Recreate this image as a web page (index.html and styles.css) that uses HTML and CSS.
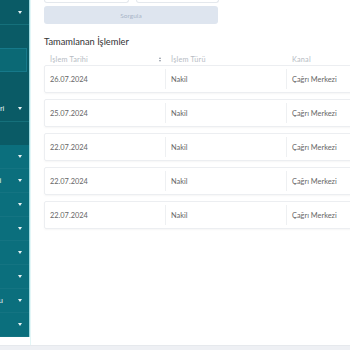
FILE: index.html
```html
<!DOCTYPE html>
<html lang="tr">
<head>
    <meta charset="UTF-8">
    <meta name="viewport" content="width=device-width, initial-scale=1.0">
    <title>Tamamlanan İşlemler</title>
    <link rel="stylesheet" href="styles.css">
</head>
<body>
    <div class="page">
        <div class="layout">
            <aside class="sidebar">
                <div class="sidebar-scroll">
                    <a class="nav-item nav-parent open"><span class="nav-label">İşlemler</span><span class="caret"></span></a>
                    <a class="nav-item nav-sub"><span class="nav-label">Yeni</span></a>
                    <a class="nav-item nav-sub active"><span class="nav-label">Geçmiş</span></a>
                    <a class="nav-item nav-sub"><span class="nav-label">Talepler</span></a>
                    <a class="nav-item nav-parent tall"><span class="nav-label">Sigorta Bilgileri</span><span class="caret"></span></a>
                    <a class="nav-item nav-sub"><span class="nav-label">Özet</span></a>

                    <div class="nav-group">
                        <a class="nav-item"><span class="nav-label">Poliçeler</span><span class="caret"></span></a>
                        <a class="nav-item"><span class="nav-label">Tahsilat Bilgisi</span><span class="caret"></span></a>
                        <a class="nav-item"><span class="nav-label">Teklifler</span><span class="caret"></span></a>
                        <a class="nav-item"><span class="nav-label">Hasarlar</span><span class="caret"></span></a>
                        <a class="nav-item"><span class="nav-label">Belgeler</span><span class="caret"></span></a>
                        <a class="nav-item"><span class="nav-label">Raporlar</span><span class="caret"></span></a>
                        <a class="nav-item"><span class="nav-label">Hasar Durumu</span><span class="caret"></span></a>
                        <a class="nav-item"><span class="nav-label">Ayarlar</span><span class="caret"></span></a>
                    </div>
                </div>
            </aside>

            <main class="main">
                <div class="filters">
                    <div class="field"></div>
                    <div class="field"></div>
                </div>
                <button type="button" class="query-btn" disabled>Sorgula</button>

                <h2 class="section-title">Tamamlanan İşlemler</h2>

                <div class="table">
                    <div class="table-head">
                        <div class="th">İşlem Tarihi <span class="sort"></span></div>
                        <div class="th">İşlem Türü</div>
                        <div class="th">Kanal</div>
                        <div class="th">Durum</div>
                    </div>

                    <div class="tr">
                        <div class="td">26.07.2024</div>
                        <div class="td">Nakil</div>
                        <div class="td">Çağrı Merkezi</div>
                        <div class="td">Tamamlandı</div>
                    </div>
                    <div class="tr">
                        <div class="td">25.07.2024</div>
                        <div class="td">Nakil</div>
                        <div class="td">Çağrı Merkezi</div>
                        <div class="td">Tamamlandı</div>
                    </div>
                    <div class="tr">
                        <div class="td">22.07.2024</div>
                        <div class="td">Nakil</div>
                        <div class="td">Çağrı Merkezi</div>
                        <div class="td">Tamamlandı</div>
                    </div>
                    <div class="tr">
                        <div class="td">22.07.2024</div>
                        <div class="td">Nakil</div>
                        <div class="td">Çağrı Merkezi</div>
                        <div class="td">Tamamlandı</div>
                    </div>
                    <div class="tr">
                        <div class="td">22.07.2024</div>
                        <div class="td">Nakil</div>
                        <div class="td">Çağrı Merkezi</div>
                        <div class="td">Tamamlandı</div>
                    </div>
                </div>
            </main>
        </div>
        <footer class="footer"></footer>
    </div>
</body>
</html>
```

FILE: styles.css
```css
body {
    font-family: Lato, "Liberation Sans", Arial, sans-serif;
    background-color: #ffffff;
    margin: 0;
    padding: 0;
    overflow: hidden;
}

.page {
    height: 350px;
    display: flex;
    flex-direction: column;
}

.layout {
    flex: 1;
    display: flex;
    align-items: flex-start;
    min-height: 0;
}

/* sidebar (sayfa yatayda kaydırılmış gibi) */
.sidebar {
    width: 29px;
    height: 337px;
    flex: none;
    overflow: hidden;
    background-color: #0a5b66;
    border-right: 1px solid #9fdbe1;
}

.sidebar-scroll {
    width: 89px;
    margin-left: -60px;
}

.nav-item {
    display: flex;
    align-items: center;
    height: 23px;
    padding: 0 7px 0 11px;
    color: #e6f3f4;
    font-family: "Liberation Sans", Arial, sans-serif;
    font-size: 8px;
    text-decoration: none;
    box-sizing: border-box;
}

.nav-label {
    flex: 1;
    white-space: nowrap;
}

.caret {
    flex: none;
    width: 0;
    height: 0;
    border-left: 2.5px solid transparent;
    border-right: 2.5px solid transparent;
    border-top: 3px solid #e8f4f5;
}

.nav-parent {
    height: 25px;
    border-bottom: 1px solid #15707b;
}

.nav-parent.tall {
    height: 27px;
}

.nav-sub {
    padding-left: 19px;
}

.nav-sub.active {
    height: 24px;
    margin-right: 2px;
    background-color: #0b6975;
    border: 1px solid #16798a;
}

.nav-group {
    background-color: #0b6f7d;
}

.nav-group .nav-item {
    height: 24px;
    border-bottom: 1px solid rgba(255, 255, 255, 0.04);
}

/* main */
.main {
    flex: 1;
    align-self: stretch;
    padding-left: 13px;
    border-left: 1px solid #e3f6f7;
    min-width: 0;
}

.filters {
    display: grid;
    grid-template-columns: 85px 83px;
    gap: 7px;
    height: 3px;
}

.field {
    border: 1px solid #e4e8ed;
    border-top: none;
    border-radius: 0 0 3px 3px;
}

.query-btn {
    display: block;
    width: 174px;
    height: 18px;
    margin-top: 3px;
    padding: 0;
    border: none;
    border-radius: 3px;
    background-color: #dee5ef;
    color: #a9b5c8;
    font-family: inherit;
    font-size: 6.5px;
}

.section-title {
    margin: 12px 0 0 0;
    font-size: 9.3px;
    line-height: 12px;
    font-weight: normal;
    color: #333333;
}

.table {
    width: 500px;
    margin-top: 5px;
}

.table-head, .tr {
    display: grid;
    grid-template-columns: 120px 121px 121px 1fr;
}

.table-head {
    height: 12px;
    padding-left: 1px;
}

.th {
    display: flex;
    align-items: center;
    padding-left: 5px;
    color: #b6bcc4;
    font-size: 7.3px;
    letter-spacing: 0.2px;
}

.th:not(:first-child) {
    padding-left: 6px;
}

.sort {
    margin-left: auto;
    margin-right: 4px;
    display: flex;
    flex-direction: column;
    gap: 1px;
}

.sort::before, .sort::after {
    content: "";
    width: 0;
    height: 0;
    border-left: 1.5px solid transparent;
    border-right: 1.5px solid transparent;
}

.sort::before {
    border-bottom: 2px solid #8e97a2;
}

.sort::after {
    border-top: 2px solid #8e97a2;
}

.tr {
    height: 28px;
    margin-bottom: 6px;
    border: 1px solid #eceef1;
    border-radius: 2px;
    box-shadow: 0 1px 2px rgba(0, 0, 0, 0.04);
    box-sizing: border-box;
}

.td {
    display: flex;
    align-items: center;
    padding-left: 5px;
    margin: 3px 0;
    color: #666666;
    font-size: 7.4px;
}

.td:not(:first-child) {
    border-left: 1px solid #eef0f2;
}

.footer {
    height: 4px;
    background-color: #eef0f4;
    border-top: 1px solid #e6e9ed;
}
```
